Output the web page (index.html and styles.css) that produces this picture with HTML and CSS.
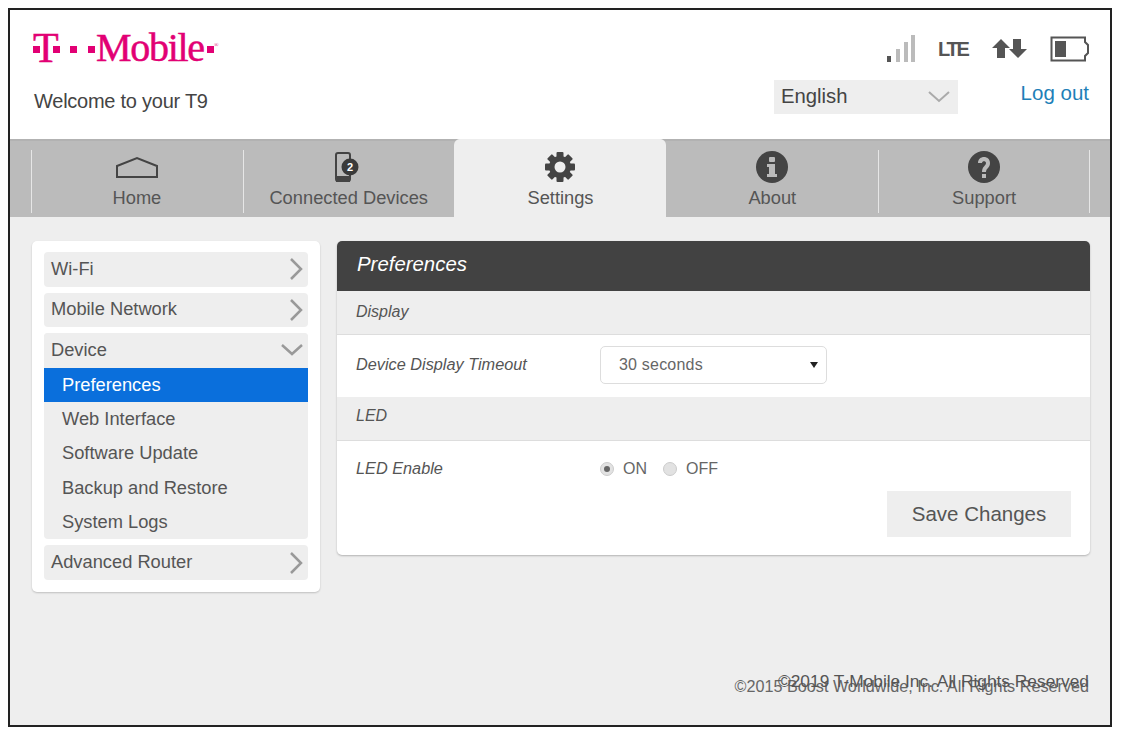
FILE: index.html
```html
<!DOCTYPE html>
<html lang="en">
<head>
<meta charset="utf-8">
<title>T-Mobile T9</title>
<link rel="stylesheet" href="styles.css">
</head>
<body>
<div class="frame">
  <header class="header">
    <div class="brand">
      <div class="logo">
        <span class="logo-t">T<i class="sq sq-l"></i><i class="sq sq-r"></i></span>
        <i class="sq sq-a"></i>
        <i class="sq sq-b"></i>
        <span class="logo-word">Mobile</span>
        <i class="sq sq-c"></i>
        <span class="logo-reg">®</span>
      </div>
      <div class="welcome">Welcome to your T9</div>
    </div>
    <div class="status">
      <div class="status-icons">
        <svg class="i-signal" width="30" height="30" viewBox="0 0 30 30"><rect x="1" y="22" width="4" height="6" fill="#555"/><rect x="10" y="15" width="4" height="13" fill="#bbb"/><rect x="18" y="8" width="4" height="20" fill="#bbb"/><rect x="25" y="1" width="4" height="27" fill="#bbb"/></svg>
        <span class="lte">LTE</span>
        <svg class="i-arrows" width="36" height="22" viewBox="0 0 36 22"><path d="M9 1 L18 10 L13 10 L13 20 L5 20 L5 10 L0 10 Z" fill="#555"/><path d="M21 1 H29 V11 H35 L26 20 L17 11 H21 Z" fill="#555"/></svg>
        <svg class="i-battery" width="40" height="26" viewBox="0 0 40 26"><path d="M1.500 1.500 H35 V6 L38 9 V17 L35 20 V24.500 H1.500 Z" fill="none" stroke="#555" stroke-width="2"/><rect x="5" y="5" width="11" height="16" fill="#555"/></svg>
      </div>
      <div class="status-row">
        <div class="lang"><span>English</span>
          <svg width="24" height="14" viewBox="0 0 24 14"><path d="M2 2 L12 11 L22 2" fill="none" stroke="#aaa" stroke-width="2"/></svg>
        </div>
        <a class="logout" href="#">Log out</a>
      </div>
    </div>
  </header>

  <nav class="tabs">
    <a class="tab">
      <svg class="icon-home" width="44" height="24" viewBox="0 0 44 24"><path d="M2 10 L22 2 L42 10 V21 H2 Z" fill="none" stroke="#444" stroke-width="2"/></svg>
      <span>Home</span>
    </a>
    <a class="tab">
      <svg width="30" height="31" viewBox="0 0 30 31"><rect x="2" y="1" width="14" height="28" rx="2" fill="none" stroke="#444" stroke-width="2"/><rect x="2" y="24" width="14" height="6" fill="#444"/><circle cx="16" cy="15" r="8.500" fill="#3a3a3a"/><text x="16" y="19" class="badge-num" text-anchor="middle">2</text></svg>
      <span>Connected Devices</span>
    </a>
    <a class="tab tab-active">
      <svg width="32" height="32" viewBox="0 0 32 32"><g fill="#444"><rect x="12.500" y="1" width="7" height="30" rx="1"/><rect x="12.500" y="1" width="7" height="30" rx="1" transform="rotate(45 16 16)"/><rect x="12.500" y="1" width="7" height="30" rx="1" transform="rotate(90 16 16)"/><rect x="12.500" y="1" width="7" height="30" rx="1" transform="rotate(135 16 16)"/><circle cx="16" cy="16" r="11"/></g><circle cx="16" cy="16" r="5.500" fill="#eee"/></svg>
      <span>Settings</span>
    </a>
    <a class="tab">
      <svg width="34" height="32" viewBox="0 0 34 32"><circle cx="17" cy="16" r="16" fill="#444"/><rect x="14" y="6" width="6" height="5" rx="1" fill="#bbb"/><path d="M12 13 H20 V23 H22 V26 H12 V23 H14 V16 H12 Z" fill="#bbb"/></svg>
      <span>About</span>
    </a>
    <a class="tab">
      <svg width="34" height="32" viewBox="0 0 34 32"><circle cx="17" cy="16" r="16" fill="#444"/><path d="M11 12 C11 4 23 4 23 12 C23 17 19 17 19 21 H15 C15 15 19 15 19 12 C19 9.500 15 9.500 15 12 Z" fill="#bbb"/><rect x="15" y="23" width="4" height="4" fill="#bbb"/></svg>
      <span>Support</span>
    </a>
  </nav>

  <main class="content">
    <aside class="sidebar">
      <div class="menu-item"><span>Wi-Fi</span><svg width="16" height="24" viewBox="0 0 16 24"><path d="M3 2 L13 12 L3 22" fill="none" stroke="#999" stroke-width="2.500"/></svg></div>
      <div class="menu-item"><span>Mobile Network</span><svg width="16" height="24" viewBox="0 0 16 24"><path d="M3 2 L13 12 L3 22" fill="none" stroke="#999" stroke-width="2.500"/></svg></div>
      <div class="menu-group">
        <div class="menu-item menu-open"><span>Device</span><svg class="down" width="22" height="14" viewBox="0 0 22 14"><path d="M1 2 L11 11 L21 2" fill="none" stroke="#999" stroke-width="2.500"/></svg></div>
        <a class="sub sub-active">Preferences</a>
        <a class="sub">Web Interface</a>
        <a class="sub">Software Update</a>
        <a class="sub">Backup and Restore</a>
        <a class="sub">System Logs</a>
      </div>
      <div class="menu-item"><span>Advanced Router</span><svg width="16" height="24" viewBox="0 0 16 24"><path d="M3 2 L13 12 L3 22" fill="none" stroke="#999" stroke-width="2.500"/></svg></div>
    </aside>

    <section class="panel">
      <h1 class="panel-title">Preferences</h1>
      <div class="section-head sh-first">Display</div>
      <div class="row row-select">
        <label class="row-label">Device Display Timeout</label>
        <div class="select"><span>30 seconds</span><i class="caret"></i></div>
      </div>
      <div class="section-head">LED</div>
      <div class="row row-radio">
        <label class="row-label">LED Enable</label>
        <div class="radios">
          <i class="radio radio-on"></i><span class="radio-text">ON</span>
          <i class="radio"></i><span class="radio-text">OFF</span>
        </div>
      </div>
      <div class="actions"><button class="save" type="button">Save Changes</button></div>
    </section>

    <div class="foot foot-old">©2015 Boost Worldwide, Inc. All Rights Reserved</div>
    <div class="foot foot-new">©2019 T-Mobile Inc. All Rights Reserved</div>
  </main>
</div>
</body>
</html>
```

FILE: styles.css
```css
* { box-sizing: border-box; }
html, body { height: 100%; }
body {
  margin: 8px 9px 6px 8px;
  height: 719px;
  background: #fff;
  font-family: "Liberation Sans", Arial, sans-serif;
  color: #555;
}
.frame {
  height: 719px;
  border: 2px solid #222;
  display: flex;
  flex-direction: column;
  background: #eee;
}
.header {
  height: 129px;
  background: #fff;
  display: flex;
  justify-content: space-between;
  padding: 0 20px 0 23px;
}
.logo {
  position: relative;
  height: 50px;
  width: 190px;
  margin-top: 14px;
  color: #e20074;
  font-family: "Liberation Serif", serif;
  -webkit-text-stroke: 0.5px #e20074;
}
.logo-t { position: absolute; left: 0; top: 1px; font-size: 42px; line-height: 46px; }
.logo-word { position: absolute; left: 63px; top: 1px; font-size: 40px; line-height: 46px; letter-spacing: -1.3px; }
.sq { position: absolute; width: 7px; height: 7px; background: #e20074; }
.sq-l { left: 0; top: 21px; }
.sq-r { left: 20px; top: 21px; }
.sq-a { left: 37px; top: 22px; }
.sq-b { left: 55px; top: 22px; }
.sq-c { left: 174px; top: 22px; }
.logo-reg { position: absolute; left: 181px; top: 17px; font-size: 6px; line-height: 8px; -webkit-text-stroke: 0; }
.welcome { margin-top: 15px; margin-left: 1px; font-size: 20px; line-height: 24px; color: #444; letter-spacing: -0.25px; }
.status { width: 316px; display: flex; flex-direction: column; }
.status-icons {
  height: 30px;
  margin-top: 24px;
  display: flex;
  align-items: center;
  justify-content: flex-end;
}
.i-signal { margin-right: 22px; }
.lte {
  width: 30px;
  font-size: 20px;
  font-weight: 700;
  letter-spacing: -2.200px;
  color: #555;
  margin-right: 24px;
  white-space: nowrap;
}
.i-arrows { margin-right: 22px; }
.status-row { display: flex; justify-content: space-between; align-items: flex-start; margin-top: 16px; }
.lang {
  width: 184px;
  height: 34px;
  background: #eee;
  display: flex;
  align-items: center;
  justify-content: space-between;
  padding: 0 7px 0 7px;
  font-size: 20.300px;
  color: #444;
}
.lang span { margin-bottom: 2px; }
.logout { font-size: 20.500px; line-height: 24px; margin: 1px 1px 0 0; color: #1e7fb8; text-decoration: none; }
.tabs {
  height: 78px;
  background: #bbb;
  box-shadow: inset 0 2px 0 #b2b2b2;
  display: flex;
  padding-left: 21px;
  padding-right: 20px;
}
.tab {
  flex: 1;
  display: flex;
  flex-direction: column;
  align-items: center;
  justify-content: flex-end;
  height: 78px;
  padding-bottom: 8px;
  font-size: 18.300px;
  line-height: 22px;
  color: #555;
  position: relative;
  gap: 4px;
}
.icon-home { margin-bottom: 3px; }
.tab::before, .tab:last-child::after {
  content: "";
  position: absolute;
  top: 11px;
  bottom: 4px;
  left: 0;
  width: 1px;
  background: #e6e6e6;
}
.tab:last-child::after { left: auto; right: 0; }
.tab-active { background: #eee; border-radius: 6px 6px 0 0; box-shadow: -1px 0 0 #eee; }
.tab-active::before { display: none; }
.tab-active + .tab::before { display: none; }
.badge-num { font: 700 11px "Liberation Sans", sans-serif; fill: #fff; }
.content {
  flex: 1;
  position: relative;
  display: flex;
  align-items: flex-start;
  padding: 24px 20px 0 22px;
  gap: 17px;
}
.sidebar {
  width: 288px;
  background: #fff;
  border-radius: 5px;
  box-shadow: 0 1px 2px rgba(0,0,0,.2);
  padding: 11px 12px 12px;
  display: flex;
  flex-direction: column;
  gap: 6px;
}
.menu-item {
  height: 34.500px;
  background: #eee;
  border-radius: 4px;
  display: flex;
  align-items: center;
  justify-content: space-between;
  padding: 0 4px 0 7px;
  font-size: 18.300px;
  color: #555;
}
.menu-item span { margin-bottom: 1px; }
.menu-open { border-radius: 4px 4px 0 0; }
.down { margin-right: 1px; }
.menu-group { background: #eee; border-radius: 4px; }
.sub {
  display: block;
  height: 34.400px;
  line-height: 34px;
  padding-left: 18px;
  font-size: 18.300px;
  color: #555;
}
.sub-active { background: #0a6fdc; color: #fff; }
.panel {
  flex: 1;
  background: #fff;
  border-radius: 5px;
  box-shadow: 0 1px 2px rgba(0,0,0,.25);
  display: flex;
  flex-direction: column;
  height: 314px;
}
.panel-title {
  margin: 0;
  height: 50px;
  background: #424242;
  color: #fff;
  border-radius: 5px 5px 0 0;
  font-size: 20.400px;
  font-style: italic;
  font-weight: 400;
  line-height: 47px;
  padding-left: 20px;
}
.section-head {
  height: 44px;
  background: #eee;
  border-bottom: 1px solid #ddd;
  font-style: italic;
  font-size: 16px;
  line-height: 38px;
  padding-left: 19px;
  color: #555;
}
.sh-first { line-height: 42px; }
.row { display: flex; align-items: center; padding-left: 19px; }
.row-select { height: 62px; padding-bottom: 2px; }
.row-select .row-label { margin-bottom: 2px; }
.row-radio { height: 56px; padding-bottom: 1px; }
.row-label { width: 244px; font-size: 16.300px; font-style: italic; color: #555; }
.select {
  width: 227px;
  height: 38px;
  border: 1px solid #ddd;
  border-radius: 5px;
  display: flex;
  align-items: center;
  justify-content: space-between;
  padding: 0 8px 0 18px;
  font-size: 16px;
  color: #666;
  letter-spacing: 0.2px;
}
.caret { width: 0; height: 0; border: 4px solid transparent; border-top: 6px solid #222; border-bottom: 0; }
.radios { display: flex; align-items: center; font-size: 16px; color: #666; }
.radio {
  width: 14px;
  height: 14px;
  border-radius: 50%;
  background: #e2e2e2;
  border: 1px solid #ccc;
  position: relative;
}
.radio-on::after {
  content: "";
  position: absolute;
  left: 3px;
  top: 3px;
  width: 6px;
  height: 6px;
  border-radius: 50%;
  background: #666;
}
.radio-text { margin: 0 16px 0 9px; }
.actions { display: flex; justify-content: flex-end; padding-right: 19px; margin-top: -6px; }
.save {
  width: 184px;
  height: 46px;
  border: 0;
  background: #eee;
  font-family: inherit;
  font-size: 20.500px;
  color: #555;
  padding: 0;
}
.foot { position: absolute; right: 21px; white-space: nowrap; color: #555; }
.foot-old { top: 460px; font-size: 16.200px; color: #666; }
.foot-new { top: 454px; font-size: 17.330px; color: #555; }
```
